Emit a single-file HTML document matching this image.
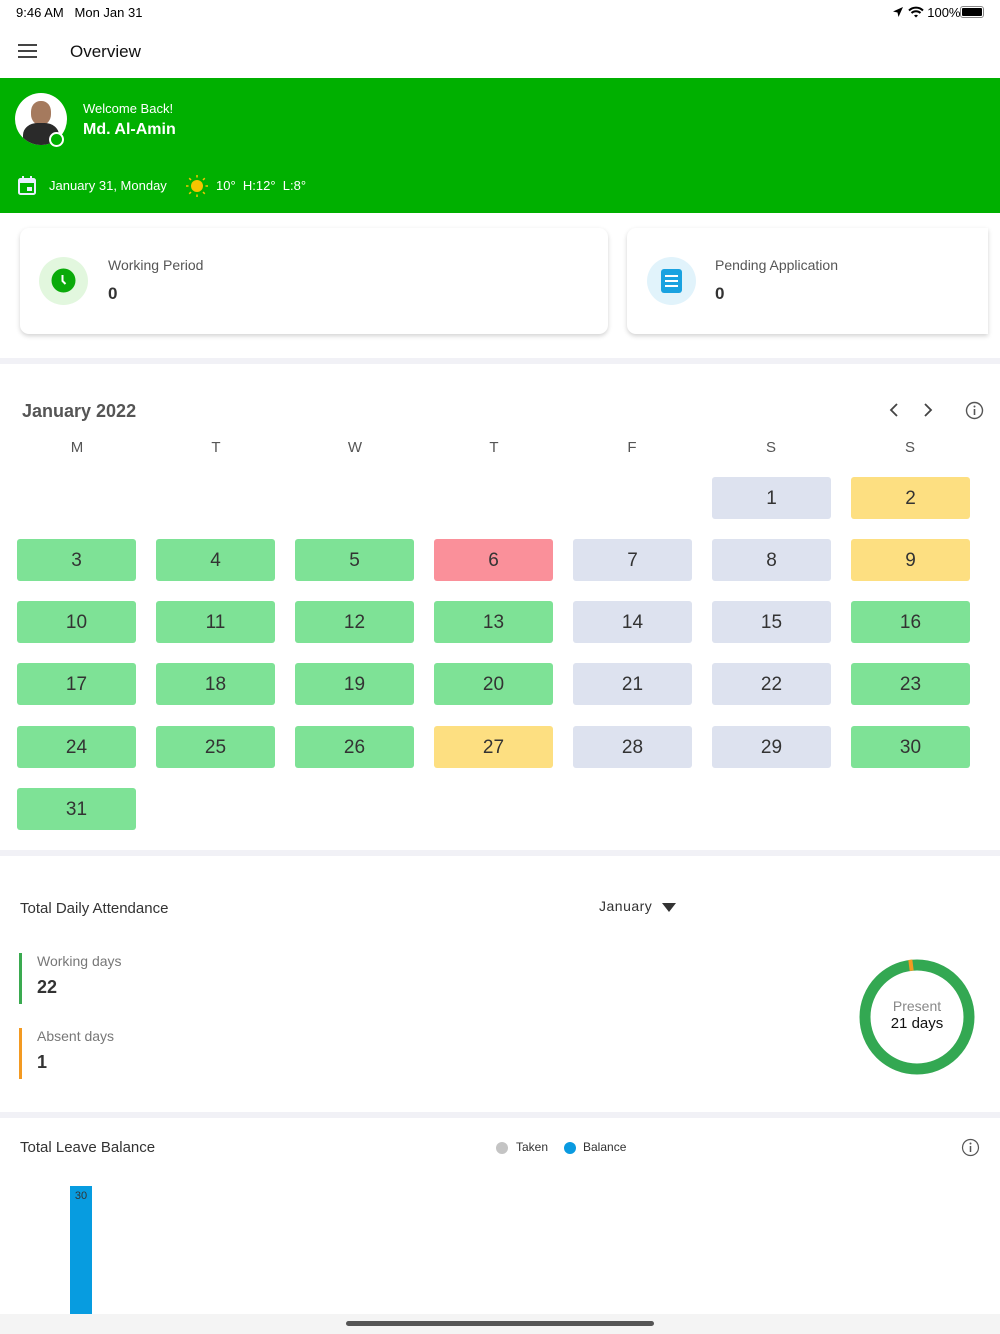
<!DOCTYPE html>
<html><head><meta charset="utf-8"><style>
*{margin:0;padding:0;box-sizing:border-box}
body{width:1000px;height:1334px;position:relative;background:#fff;font-family:"Liberation Sans",sans-serif;overflow:hidden;color:#333}
.a{position:absolute}
.c{position:absolute;width:119px;height:42px;border-radius:3px;text-align:center;line-height:43px;font-size:19px;color:#333}
.g{background:#7ee296}.y{background:#fddf81}.r{background:#fa909a}.s{background:#dde2ef}
.d{position:absolute;top:439px;width:40px;text-align:center;font-size:15px;color:#555}
.card{position:absolute;top:228px;height:106px;background:#fff;border-radius:9px;box-shadow:0 2px 5px rgba(0,0,0,.18)}
.sep{position:absolute;left:0;width:1000px;background:#f1f1f6}
</style></head><body>
<div class="a" style="left:16px;top:5px;font-size:13px;color:#000">9:46 AM&nbsp;&nbsp;&nbsp;Mon Jan 31</div>
<div class="a" style="left:892px;top:5px;font-size:13px;color:#000">
<svg width="12" height="12" viewBox="0 0 12 12" style="vertical-align:-1px"><path d="M11 1L1 5.5l4.5 1 1 4.5z" fill="#000"/></svg>
<svg width="16" height="12" viewBox="0 0 16 12" style="vertical-align:-1px"><path d="M1 4.5a10 10 0 0 1 14 0M3.5 7a6.5 6.5 0 0 1 9 0" stroke="#000" stroke-width="2" fill="none"/><path d="M6 9.5a3 3 0 0 1 4 0L8 11.5z" fill="#000"/></svg> 100%</div>
<div class="a" style="left:960px;top:6px;width:24px;height:12px;border:1px solid #888;border-radius:3px;padding:1px"><div style="width:100%;height:100%;background:#000;border-radius:1px"></div></div>
<div class="a" style="left:18px;top:44px;width:19px;height:2px;background:#444;box-shadow:0 6px 0 #444,0 12px 0 #444"></div>
<div class="a" style="left:70px;top:42px;font-size:17px;color:#111">Overview</div>
<div class="a" style="left:0;top:78px;width:1000px;height:135px;background:#00b000"></div>
<div class="a" style="left:15px;top:93px;width:52px;height:52px;border-radius:50%;background:#fff;overflow:hidden">
<div class="a" style="left:16px;top:8px;width:20px;height:24px;border-radius:45%;background:#a57a5e"></div>
<div class="a" style="left:8px;top:30px;width:36px;height:30px;border-radius:40% 40% 0 0;background:#2a2a2a"></div></div>
<div class="a" style="left:49px;top:132px;width:15px;height:15px;border-radius:50%;border:2px solid #fff;background:#00b000"></div>
<div class="a" style="left:83px;top:101px;font-size:13px;color:#fff">Welcome Back!</div>
<div class="a" style="left:83px;top:121px;font-size:16px;font-weight:bold;color:#fff">Md. Al-Amin</div>
<svg class="a" style="left:17px;top:175px" width="20" height="21" viewBox="0 0 20 21"><rect x="2" y="4" width="16" height="15" rx="1.5" fill="none" stroke="#e8f0ff" stroke-width="2"/><rect x="2" y="4" width="16" height="4" fill="#e8f0ff"/><rect x="5" y="1" width="2" height="4" fill="#e8f0ff"/><rect x="13" y="1" width="2" height="4" fill="#e8f0ff"/><rect x="10" y="12" width="5" height="4" fill="#e8f0ff"/></svg>
<div class="a" style="left:49px;top:178px;font-size:13px;color:#fff">January 31, Monday</div>
<svg class="a" style="left:186px;top:175px" width="22" height="22" viewBox="0 0 22 22"><circle cx="11" cy="11" r="6" fill="#f5c400"/><g stroke="#f5c400" stroke-width="1.5"><path d="M11 0v2.5M11 19.5V22M0 11h2.5M19.5 11H22M3.2 3.2l1.8 1.8M17 17l1.8 1.8M3.2 18.8L5 17M17 5l1.8-1.8"/></g></svg>
<div class="a" style="left:216px;top:178px;font-size:13px;color:#fff">10°&nbsp;&nbsp;H:12°&nbsp;&nbsp;L:8°</div>
<div class="card" style="left:20px;width:588px"></div>
<div class="card" style="left:627px;width:361px;border-radius:9px 0 0 9px"></div>
<div class="a" style="left:39px;top:257px;width:49px;height:48px;border-radius:50%;background:#e2f7de"></div>
<svg class="a" style="left:51px;top:268px" width="25" height="25" viewBox="0 0 25 25"><circle cx="12.5" cy="12.5" r="12" fill="#0aaa0a"/><path d="M11.5 7v6l3 3" stroke="#fff" stroke-width="2" fill="none"/></svg>
<div class="a" style="left:108px;top:257px;font-size:14px;color:#555">Working Period</div>
<div class="a" style="left:108px;top:284px;font-size:17px;font-weight:bold;color:#333">0</div>
<div class="a" style="left:647px;top:257px;width:49px;height:48px;border-radius:50%;background:#e1f3fb"></div>
<div class="a" style="left:661px;top:269px;width:21px;height:24px;border-radius:3px;background:#1aa2e0"></div>
<div class="a" style="left:665px;top:275px;width:13px;height:2px;background:#fff;box-shadow:0 5px 0 #fff,0 10px 0 #fff"></div>
<div class="a" style="left:715px;top:257px;font-size:14px;color:#555">Pending Application</div>
<div class="a" style="left:715px;top:284px;font-size:17px;font-weight:bold;color:#333">0</div>
<div class="sep" style="top:358px;height:6px"></div>
<div class="a" style="left:22px;top:401px;font-size:18px;font-weight:bold;color:#555">January 2022</div>
<svg class="a" style="left:886px;top:402px" width="50" height="16" viewBox="0 0 50 16"><path d="M11 2L5 8l6 6M39 2l6 6-6 6" stroke="#444" stroke-width="1.8" fill="none"/></svg>
<svg class="a" style="left:965px;top:401px" width="19" height="19" viewBox="0 0 19 19"><circle cx="9.5" cy="9.5" r="8" fill="none" stroke="#555" stroke-width="1.4"/><path d="M9.5 8v6" stroke="#555" stroke-width="1.6"/><circle cx="9.5" cy="5.5" r="1" fill="#555"/></svg>
<div class="d" style="left:57px">M</div><div class="d" style="left:196px">T</div><div class="d" style="left:335px">W</div><div class="d" style="left:474px">T</div><div class="d" style="left:612px">F</div><div class="d" style="left:751px">S</div><div class="d" style="left:890px">S</div>
<div class="c s" style="left:712px;top:477px">1</div><div class="c y" style="left:851px;top:477px">2</div>
<div class="c g" style="left:17px;top:539px">3</div><div class="c g" style="left:156px;top:539px">4</div><div class="c g" style="left:295px;top:539px">5</div><div class="c r" style="left:434px;top:539px">6</div><div class="c s" style="left:573px;top:539px">7</div><div class="c s" style="left:712px;top:539px">8</div><div class="c y" style="left:851px;top:539px">9</div>
<div class="c g" style="left:17px;top:601px">10</div><div class="c g" style="left:156px;top:601px">11</div><div class="c g" style="left:295px;top:601px">12</div><div class="c g" style="left:434px;top:601px">13</div><div class="c s" style="left:573px;top:601px">14</div><div class="c s" style="left:712px;top:601px">15</div><div class="c g" style="left:851px;top:601px">16</div>
<div class="c g" style="left:17px;top:663px">17</div><div class="c g" style="left:156px;top:663px">18</div><div class="c g" style="left:295px;top:663px">19</div><div class="c g" style="left:434px;top:663px">20</div><div class="c s" style="left:573px;top:663px">21</div><div class="c s" style="left:712px;top:663px">22</div><div class="c g" style="left:851px;top:663px">23</div>
<div class="c g" style="left:17px;top:726px">24</div><div class="c g" style="left:156px;top:726px">25</div><div class="c g" style="left:295px;top:726px">26</div><div class="c y" style="left:434px;top:726px">27</div><div class="c s" style="left:573px;top:726px">28</div><div class="c s" style="left:712px;top:726px">29</div><div class="c g" style="left:851px;top:726px">30</div>
<div class="c g" style="left:17px;top:788px">31</div>
<div class="sep" style="top:850px;height:6px"></div>
<div class="a" style="left:20px;top:900px;font-size:15px;color:#333">Total Daily Attendance</div>
<div class="a" style="left:599px;top:898px;font-size:14px;color:#333;letter-spacing:.5px">January</div>
<svg class="a" style="left:662px;top:902px" width="14" height="10"><path d="M0 1h14L7 10z" fill="#333"/></svg>
<div class="a" style="left:19px;top:953px;width:3px;height:51px;background:#3aaa50"></div>
<div class="a" style="left:37px;top:953px;font-size:14px;color:#777">Working days</div>
<div class="a" style="left:37px;top:977px;font-size:18px;font-weight:bold;color:#333">22</div>
<div class="a" style="left:19px;top:1028px;width:3px;height:51px;background:#f39a22"></div>
<div class="a" style="left:37px;top:1028px;font-size:14px;color:#777">Absent days</div>
<div class="a" style="left:37px;top:1052px;font-size:18px;font-weight:bold;color:#333">1</div>
<svg class="a" style="left:858px;top:958px" width="118" height="118" viewBox="0 0 118 118"><circle cx="59" cy="59" r="52" fill="none" stroke="#33a852" stroke-width="11"/><path d="M51 7.5L55 7" stroke="#f39a22" stroke-width="11"/></svg>
<div class="a" style="left:858px;top:998px;width:118px;text-align:center;font-size:14px;color:#888">Present</div>
<div class="a" style="left:858px;top:1015px;width:118px;text-align:center;font-size:15px;color:#111">21 days</div>
<div class="sep" style="top:1112px;height:6px"></div>
<div class="a" style="left:20px;top:1139px;font-size:15px;color:#333">Total Leave Balance</div>
<div class="a" style="left:496px;top:1142px;width:12px;height:12px;border-radius:50%;background:#c4c4c4"></div>
<div class="a" style="left:516px;top:1140px;font-size:12px;color:#333">Taken</div>
<div class="a" style="left:564px;top:1142px;width:12px;height:12px;border-radius:50%;background:#0a9ae0"></div>
<div class="a" style="left:583px;top:1140px;font-size:12px;color:#333">Balance</div>
<svg class="a" style="left:961px;top:1138px" width="19" height="19" viewBox="0 0 19 19"><circle cx="9.5" cy="9.5" r="8" fill="none" stroke="#555" stroke-width="1.2"/><path d="M9.5 8v6" stroke="#555" stroke-width="1.5"/><circle cx="9.5" cy="5.5" r="1" fill="#555"/></svg>
<div class="a" style="left:70px;top:1186px;width:22px;height:128px;background:#079ce0"></div>
<div class="a" style="left:70px;top:1190px;width:22px;text-align:center;font-size:11px;color:#333">30</div>
<div class="a" style="left:0;top:1314px;width:1000px;height:20px;background:#f4f4f4"></div>
<div class="a" style="left:346px;top:1321px;width:308px;height:5px;border-radius:3px;background:#555"></div>
</body></html>
